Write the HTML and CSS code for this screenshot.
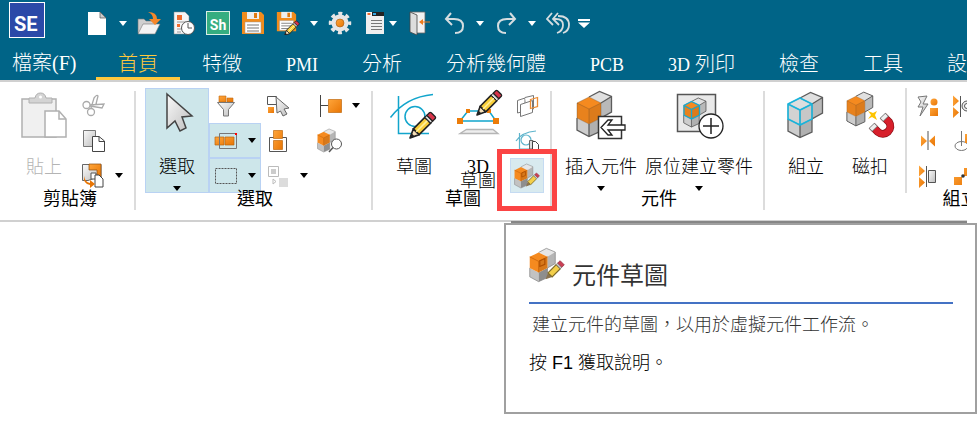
FILE: index.html
```html
<!DOCTYPE html>
<html lang="zh-Hant">
<head>
    <meta charset="UTF-8">
    <title>Solid Edge</title>
    <link rel="stylesheet" href="styles.css">
</head>
<body>

<!-- shared shapes -->
<svg class="defs" aria-hidden="true">
    <defs>
        <linearGradient id="orange" x1="0" y1="0" x2="1" y2="1">
            <stop offset="0" stop-color="#ffa53a"/>
            <stop offset="1" stop-color="#e87504"/>
        </linearGradient>
        <linearGradient id="gray" x1="0" y1="0" x2="1" y2="1">
            <stop offset="0" stop-color="#fafafa"/>
            <stop offset="1" stop-color="#bdbdbd"/>
        </linearGradient>
    </defs>
    <symbol id="blocks" viewBox="-1 -1 37 48">
        <path d="M12 6 22.5 .5 34.5 5.5V21L24 27V12z" fill="#e0e0e0"/>
        <path d="M24 12 34.5 5.5V21L24 27z" fill="#b9b9b9"/>
        <path d="M0 27 12 33V45.5L0 39z" fill="#cdcdcd"/>
        <path d="M12 33 24 27V40L12 45.5z" fill="#b0b0b0"/>
        <path d="M12 6 22.5 .5 34.5 5.5V21L24 27V40L12 45.5 0 39V27M12 33V45.5M24 12 34.5 5.5" fill="none" stroke="#5c5c5c" stroke-width="1.3"/>
        <path d="M12 6 24 12V27L12 33 0 27V12z" fill="currentColor"/>
        <path d="M0 12 12 18V33L0 27z" fill="#000" opacity=".05"/>
        <path d="M12 18 24 12V27L12 33z" fill="#000" opacity=".1"/>
        <path d="M12 6 24 12V27L12 33 0 27V12zM0 12 12 18 24 12M12 18V33" fill="none" stroke="#6b4a2a" stroke-opacity=".35"/>
    </symbol>
    <symbol id="blocks-soft" viewBox="-1 -1 37 48">
        <path d="M12 6 22.5 .5 34.5 5.5V21L24 27V12z" fill="#e6e6e6"/>
        <path d="M24 12 34.5 5.5V21L24 27z" fill="#b5b5b5"/>
        <path d="M0 27 12 33V45.5L0 39z" fill="#c2c2c2"/>
        <path d="M12 33 24 27V40L12 45.5z" fill="#8e8e8e"/>
        <path d="M12 6 22.5 .5 34.5 5.5V21L24 27V40L12 45.5 0 39V27" fill="none" stroke="#888"/>
        <path d="M12 6 24 12V27L12 33 0 27V12z" fill="currentColor"/>
        <path d="M12 18 24 12V27L12 33z" fill="#000" opacity=".12"/>
        <path d="M0 12 12 18 24 12M12 18V33" fill="none" stroke="#c46208"/>
    </symbol>
    <symbol id="pencil" viewBox="0 0 27 27">
        <path d="M1 26 4.2 17.2 9.8 22.8z" fill="#f6dfb8" stroke="#222" stroke-width="1.6" stroke-linejoin="round"/>
        <path d="M1 26 2.5 21.5 5.5 24.5z" fill="#222"/>
        <path d="M4.2 17.2 15.2 6.2 20.8 11.8 9.8 22.8z" fill="#f9cf3a" stroke="#222" stroke-width="1.6"/>
        <path d="M7 20 18 9" stroke="#fff0a0" stroke-width="1.5"/>
        <path d="M15.2 6.2 17.2 4.2 22.8 9.8 20.8 11.8z" fill="#ddd" stroke="#222"/>
        <path d="M17.2 4.2 19.7 1.7Q20.5 1 21.5 1.7L25.3 5.5Q26 6.5 25.3 7.3L22.8 9.8z" fill="#d8344a" stroke="#222" stroke-width="1.3"/>
    </symbol>
    <symbol id="pencil-soft" viewBox="0 0 27 27">
        <path d="M1 26 4.2 17.2 9.8 22.8z" fill="#8a7350"/>
        <path d="M4.2 17.2 15.2 6.2 20.8 11.8 9.8 22.8z" fill="#f3cf4a" stroke="#7d6a2a" stroke-width="1.6"/>
        <path d="M15.2 6.2 17.2 4.2 22.8 9.8 20.8 11.8z" fill="#ccc" stroke="#777"/>
        <path d="M17.2 4.2 20.5 1 26 6.5 22.8 9.8z" fill="#cc3f54" stroke="#8f3040"/>
    </symbol>
    <symbol id="caret" viewBox="0 0 8 5">
        <path d="M0 0H8L4 5z" fill="currentColor"/>
    </symbol>
    <symbol id="part-sketch" viewBox="1 1 25 25">
        <use href="#blocks-soft" x="1" y="1" width="19" height="25"/>
        <path d="M8.5 10.5 12 9V13L8.500 14.5z" fill="none" stroke="#b04f00" stroke-width=".8"/>
        <use href="#pencil-soft" x="12" y="10" width="14" height="14"/>
    </symbol>
    <symbol id="floppy" viewBox="0 0 24 24">
        <path d="M1 1H20L23 4V23H1z" fill="#f28c1c"/>
        <path d="M6 1H18V8H6z" fill="#eee"/>
        <path d="M13 2H16V7H13z" fill="#e07a10"/>
        <path d="M4 11H20V22H4z" fill="#fff" stroke="#999" stroke-width=".5"/>
        <path d="M6 14H18M6 17H18M6 20H18" stroke="#777"/>
    </symbol>
</svg>

<div class="app">
    <header class="titlebar">
        <div class="quick-bar">
            <div class="logo">SE</div>
            <button class="quick" aria-label="新建">
                <svg viewBox="0 0 24 24"><path d="M3 1H15L21 7V24H3z" fill="#fff"/><path d="M15 1V7H21z" fill="#ccc" stroke="#555" stroke-width=".7"/></svg>
            </button>
            <button class="quick-caret" aria-label="新建選項"><svg><use href="#caret"/></svg></button>
            <button class="quick" aria-label="開啟">
                <svg viewBox="0 0 24 24"><path d="M1 22V8H7L9 10H18V22z" fill="#cfcfcf" stroke="#777" stroke-width=".6"/><path d="M1 23 6 13H23L18 23z" fill="#f3f3f3" stroke="#777" stroke-width=".6"/><path d="M11 1Q20 1 20 8H24L18 14 12 8H16Q16 3 11 1z" fill="#f5872a"/></svg>
            </button>
            <button class="quick" aria-label="最近的文件">
                <svg viewBox="0 0 24 24"><path d="M2 1H13L17 5V23H2z" fill="#f5f5f5" stroke="#888" stroke-width=".5"/><path d="M5 4H10V9H5zM5 13H8V16H5z" fill="#ee6b2d"/><path d="M5 11H14M5 18H9M5 21H9" stroke="#999"/><circle cx="16" cy="17" r="6.5" fill="#fff" stroke="#555"/><path d="M16 12V17H20" fill="none" stroke="#555"/></svg>
            </button>
            <button class="quick sh">Sh</button>
            <button class="quick" aria-label="儲存"><svg><use href="#floppy"/></svg></button>
            <button class="quick" aria-label="另存新檔">
                <svg viewBox="0 0 24 24"><use href="#floppy" width="21" height="21"/><use href="#pencil" x="8" y="9" width="16" height="16"/></svg>
            </button>
            <button class="quick-caret" aria-label="儲存選項"><svg><use href="#caret"/></svg></button>
            <button class="quick" aria-label="設定">
                <svg viewBox="0 0 24 24"><circle cx="12" cy="12" r="9.5" fill="none" stroke="#e6e6e6" stroke-width="3.5" stroke-dasharray="4 3.46" stroke-dashoffset="2"/><circle cx="12" cy="12" r="8.5" fill="#e6e6e6"/><circle cx="12" cy="12" r="4" fill="url(#orange)" stroke="#a65a10" stroke-width=".6"/></svg>
            </button>
            <button class="quick" aria-label="視窗">
                <svg viewBox="0 0 24 24"><path d="M3 1H21V6H3z" fill="#222"/><path d="M3 1H9V5H3z" fill="#f5f5f5"/><path d="M4.500 2H7.500V4H4.500z" fill="#ee6b2d"/><path d="M10 2H13V4H10z" fill="#35a7e0"/><path d="M3 5H21V23H3z" fill="#efefef"/><path d="M8 9.500H19M8 12.500H19M8 15.500H19M8 18.500H19" stroke="#777"/></svg>
            </button>
            <button class="quick-caret near" aria-label="視窗選項"><svg><use href="#caret"/></svg></button>
            <button class="quick" aria-label="關閉">
                <svg viewBox="0 0 24 24"><path d="M3 1H18V22H10" fill="#f2f2f2" stroke="#666" stroke-width=".8"/><path d="M3 1 10 4V24L3 21z" fill="#ddd" stroke="#444" stroke-width=".8"/><path d="M12 11 16 8V10.500H23V11.500H16V14z" fill="#ee7b1d"/></svg>
            </button>
            <button class="quick" aria-label="復原">
                <svg viewBox="0 0 24 24" fill="none" stroke="#d5dde0" stroke-width="2"><path d="M9 2 4 8 10 14M4 8H12Q21 8 21 15T13 22"/></svg>
            </button>
            <button class="quick-caret" aria-label="復原選項"><svg><use href="#caret"/></svg></button>
            <button class="quick" aria-label="重做">
                <svg viewBox="0 0 24 24" fill="none" stroke="#d5dde0" stroke-width="2"><path d="M16 2 21 8 15 14M21 8H13Q4 8 4 15T12 22"/></svg>
            </button>
            <button class="quick-caret" aria-label="重做選項"><svg><use href="#caret"/></svg></button>
            <button class="quick" aria-label="全部復原">
                <svg viewBox="0 0 24 24" fill="none" stroke="#d5dde0" stroke-width="1.8"><path d="M6 2 1 8 7 14M12 2 7 8 13 14M7 8H10Q17 8 17 14 17 20 11 22M12 5Q23 5 23 14 23 20 17 22"/></svg>
            </button>
            <button class="quick-caret" aria-label="自訂快速存取工具列">
                <svg class="wide-caret" viewBox="0 0 12 9"><path d="M0 0H12V2H0zM0 3.500H12L6 9z" fill="#fff"/></svg>
            </button>
        </div>
        <nav class="tabs">
            <button class="tab file">檔案(F)</button>
            <button class="tab active">首頁</button>
            <button class="tab">特徵</button>
            <button class="tab"><span class="latin">PMI</span></button>
            <button class="tab">分析</button>
            <button class="tab">分析幾何體</button>
            <button class="tab"><span class="latin">PCB</span></button>
            <button class="tab"><span class="latin">3D</span> 列印</button>
            <button class="tab">檢查</button>
            <button class="tab">工具</button>
            <button class="tab">設定</button>
        </nav>
    </header>

    <main class="ribbon">
        <section class="group">
            <div class="group-body">
                <button class="large" disabled>
                    <svg viewBox="0 0 52 52"><path d="M4 10H38V48H4z" fill="#f0f0f0" stroke="#b0b0b0" stroke-width="1.5"/><path d="M11 14V9H17Q18 4 22.5 4T28 9H34V14z" fill="#d4d4d4" stroke="#b0b0b0"/><circle cx="22.5" cy="8" r="1.5" fill="#fff"/><path d="M27 22H41L48 30V48H27z" fill="#fff" stroke="#b0b0b0" stroke-width="1.5"/><path d="M41 22V30H48" fill="none" stroke="#b0b0b0" stroke-width="1.5"/></svg>
                    <span class="caption">貼上</span>
                </button>
                <div class="tools">
                    <div class="tool">
                        <button aria-label="剪下" disabled><svg viewBox="0 0 28 28" fill="none" stroke="#aaa" stroke-width="1.3"><circle cx="7.5" cy="13" r="3.5"/><circle cx="12" cy="20" r="3.5"/><path d="M11 13 25 12 23 16 11 14M12 16 15 6Q18 2 19 4L17 12"/></svg></button>
                    </div>
                    <div class="tool">
                        <button aria-label="複製"><svg viewBox="0 0 28 28"><path d="M4.5 3.5H16.500V19.500H4.5z" fill="url(#gray)" stroke="#777"/><path d="M13.500 9.500H20L25.500 14V24.500H13.500z" fill="#fff" stroke="#444"/><path d="M20 9.500V14.500H25" fill="none" stroke="#444"/></svg></button>
                    </div>
                    <div class="tool">
                        <button aria-label="選擇性貼上"><svg viewBox="0 0 28 28"><path d="M3.5 2.500H22V16H16L9 18.500H3.500z" fill="url(#gray)" stroke="#666"/><path d="M10 2H22V16H18V8H10z" fill="url(#orange)" stroke="#8a4a10" stroke-width=".7"/><path d="M12 11H17V17H12z" fill="#fff" stroke="#555"/><path d="M16 13H20L24 17V25H16z" fill="#fff" stroke="#444"/><path d="M5 14Q6 20 11 21V18L16 22 11 26V23Q4 22 5 14z" fill="#e87504"/></svg></button>
                        <button class="drop" aria-label="貼上選項"><svg><use href="#caret"/></svg></button>
                    </div>
                </div>
            </div>
            <h2>剪貼簿</h2>
        </section>

        <section class="group">
            <div class="group-body">
                <button class="large selected">
                    <svg viewBox="0 0 52 52"><path d="M16 5 41 27 31 28 35 39 29 42 24 32 16 39z" fill="url(#gray)" stroke="#444" stroke-width="1.5"/></svg>
                    <span class="caption">選取</span>
                    <svg class="more"><use href="#caret"/></svg>
                </button>
                <div class="tools">
                    <div class="tool">
                        <button aria-label="選取篩選器"><svg viewBox="0 0 28 28"><path d="M7 4H14V10H7zM15 6H21V10H15z" fill="url(#orange)" stroke="#c06a10" stroke-width=".6"/><path d="M5.500 10.500H22.500L16.500 17.500V24H11.500V17.500z" fill="url(#gray)" stroke="#777"/></svg></button>
                    </div>
                    <div class="tool selected">
                        <button aria-label="方框選取"><svg viewBox="0 0 28 28"><path d="M3 10H12V18H3zM13 10H22V18H13z" fill="url(#orange)" stroke="#b86410" stroke-width=".7"/><path d="M7.500 6.500H24.500V21.500H7.500z" fill="none" stroke="#777"/><path d="M23 6H25V8H23z" fill="#f00"/></svg></button>
                        <button class="drop" aria-label="方框選取選項"><svg><use href="#caret"/></svg></button>
                    </div>
                    <div class="tool selected">
                        <button aria-label="矩形選取"><svg viewBox="0 0 28 28"><path d="M3.500 6.500H24.500V21.500H3.500z" fill="none" stroke="#555" stroke-dasharray="2 1"/></svg></button>
                        <button class="drop" aria-label="矩形選取選項"><svg><use href="#caret"/></svg></button>
                    </div>
                    <div class="tool">
                        <button aria-label="快速選取"><svg viewBox="0 0 28 28"><path d="M3.500 4.500H12.500V12.500H3.500z" fill="#fff" stroke="#555"/><path d="M4 15H10V21H4z" fill="url(#orange)"/><path d="M12 5 25 16 20 17 23 22 19 24 16.500 19 13 21z" fill="url(#gray)" stroke="#666"/></svg></button>
                    </div>
                    <div class="tool">
                        <button aria-label="選取零件"><svg viewBox="0 0 28 28"><path d="M5.500 10.500H22.500V24.500H5.500z" fill="#fff" stroke="#555"/><path d="M9.500 3.500H18.500V11.500H9.500zM9.500 13.500H18.500V22.500H9.500z" fill="url(#orange)" stroke="#c06a10" stroke-width=".7"/></svg></button>
                    </div>
                    <div class="tool">
                        <button aria-label="選取集" disabled><svg viewBox="0 0 28 28"><path d="M4.500 4.500H14.500V14.500H4.500z" fill="#fff" stroke="#bbb"/><path d="M7 7H12V12H7z" fill="#ccc"/><path d="M9 17V22L12 19.500z" fill="#fff" stroke="#bbb"/><path d="M15 16H24V25H15z" fill="#dcdcdc"/></svg></button>
                        <button class="drop" aria-label="選取集選項"><svg><use href="#caret"/></svg></button>
                    </div>
                    <div class="tool">
                        <button aria-label="啟用零件"><svg viewBox="0 0 28 28"><path d="M4.500 3V25M4.500 13.500H12" stroke="#444"/><path d="M12.500 7.500H25.500V20.500H12.500z" fill="url(#orange)" stroke="#c06a10" stroke-width=".7"/></svg></button>
                        <button class="drop" aria-label="啟用零件選項"><svg><use href="#caret"/></svg></button>
                    </div>
                    <div class="tool">
                        <button class="orange" aria-label="尋找零件"><svg viewBox="0 0 28 28"><use href="#blocks-soft" x="1" y="1" width="19" height="25"/><circle cx="20.500" cy="17" r="5" fill="#fff" stroke="#555"/><path d="M17 20.500 13 25" stroke="#555" stroke-width="1.5"/></svg></button>
                    </div>
                </div>
            </div>
            <h2>選取</h2>
        </section>

        <section class="group">
            <div class="group-body">
                <button class="large">
                    <svg viewBox="0 0 52 52"><g fill="none" stroke="#12a5cc" stroke-width="1.5"><path d="M10.5 7V44.500H41M2.5 28.500Q18 8 45 5.500"/><circle cx="27" cy="27.500" r="10"/></g><use href="#pencil" x="21" y="22" width="28" height="28"/></svg>
                    <span class="caption">草圖</span>
                </button>
                <button class="large">
                    <svg viewBox="0 0 52 52"><path d="M8 32 16 22H37L44 32z" fill="#fff" stroke="#12a5cc" stroke-width="1.5"/><path d="M8 44.500 14.500 40.500H41L46 44.500z" fill="#eee" stroke="#b5b5b5" stroke-width="1.3"/><path d="M5 29H11V35H5zM41 29H47V35H41zM14 20H18V24H14zM35 20H39V24H35z" fill="#ec7c09"/><use href="#pencil" x="24" y="0" width="27" height="27"/></svg>
                    <span class="caption stacked">3D<br>草圖</span>
                </button>
                <div class="tools narrow">
                    <div class="tool">
                        <button aria-label="複製草圖"><svg viewBox="0 0 28 28"><path d="M4.500 8.500 12 6V19L4.500 21z" fill="#fff" stroke="#777"/><path d="M12 5.500 20.500 3.500V17L15 18.500" fill="#fff" stroke="#777"/><path d="M7.500 12.500 19.500 8.500V20.500L7.500 24.500z" fill="#fff" stroke="#777"/><path d="M17.500 7.500 24.500 5.500V14.500L17.500 16.500z" fill="none" stroke="#ec8d35" stroke-width="1.3"/></svg></button>
                    </div>
                    <div class="tool">
                        <button aria-label="貼上草圖"><svg viewBox="0 0 28 28"><g fill="none" stroke="#5eb4cc" stroke-width="1.2"><path d="M6.500 6V22H16M3 14Q9 5 23 4"/><circle cx="13" cy="13" r="5"/></g><path d="M16.500 13.500H20V22H16.500z" fill="#ddd" stroke="#666"/><path d="M19.500 14.500H22.500L25.500 17.500V24H19.500z" fill="#fff" stroke="#444"/></svg></button>
                    </div>
                    <div class="tool callout">
                        <button class="orange" aria-label="元件草圖"><svg viewBox="0 0 28 28"><use href="#part-sketch" x="1" y="1" width="26" height="26"/></svg></button>
                    </div>
                </div>
            </div>
            <h2>草圖</h2>
        </section>

        <section class="group">
            <div class="group-body">
                <button class="large">
                    <svg class="orange" viewBox="0 0 52 52"><use href="#blocks" x="1" y="1" width="37" height="48"/><path d="M23.500 27.500H46.500V49.500H23.500z" fill="#fff" stroke="#333" stroke-width="1.5"/><path d="M26 38.500 33 31H37L33 36H50V41H33L37 46H33z" fill="#fff" stroke="#222" stroke-width="1.3"/></svg>
                    <span class="caption">插入元件</span>
                    <svg class="more"><use href="#caret"/></svg>
                </button>
                <button class="large">
                    <svg class="orange" viewBox="0 0 52 52"><path d="M4.500 5.500H42.500V42.500H4.500z" fill="#e9e9e9" stroke="#555" stroke-width="1.5"/><use href="#blocks" x="10" y="8" width="24" height="31"/><path d="M18.500 12.500 26.500 16.500V26L18.500 30 11 26V16.500zM11 16.500 18.500 20.500 26.500 16.500M18.500 20.500V30" fill="none" stroke="#18a8d0" stroke-width="1.3"/><circle cx="38" cy="37" r="12" fill="#fff" stroke="#222" stroke-width="1.3"/><path d="M30 37H46M38 29V45" stroke="#222" stroke-width="1.5"/></svg>
                    <span class="caption">原位建立零件</span>
                    <svg class="more"><use href="#caret"/></svg>
                </button>
            </div>
            <h2>元件</h2>
        </section>

        <section class="group assemble">
            <div class="group-body">
                <button class="large">
                    <svg class="gray" viewBox="0 0 52 52"><use href="#blocks" x="7" y="2" width="37" height="48"/><path d="M20 9 32 15V30L20 36 8 30V15zM8 15 20 21 32 15M20 21V36" fill="none" stroke="#18b4dc" stroke-width="1.6"/></svg>
                    <span class="caption">組立</span>
                </button>
                <button class="large">
                    <svg class="orange" viewBox="0 0 52 52"><use href="#blocks" x="2" y="2" width="28" height="36"/><path d="M24 22 29 24 33 22 31 26 33 31 28 28 24 30 27 26z" fill="#fdc400"/><path d="M28 37 34 43A7.500 7.500 0 0 0 45 33L39 27" fill="none" stroke="#8c1018" stroke-width="8"/><path d="M28 37 34 43A7.500 7.500 0 0 0 45 33L39 27" fill="none" stroke="#d71f2b" stroke-width="6.500"/><path d="M27.500 36.500 31 40M38.500 26.500 42 30" stroke="#777" stroke-width="8"/><path d="M28 37 30.500 39.500M39 27 41.500 29.500" stroke="#eee" stroke-width="6.500"/></svg>
                    <span class="caption">磁扣</span>
                </button>
                <div class="separator"></div>
                <div class="tools narrow">
                    <div class="tool">
                        <button aria-label="快速組立"><svg viewBox="0 0 28 28"><path d="M5 5 14 4 10 12H15L7 24 10 15H5L8 10z" fill="url(#gray)" stroke="#777"/><circle cx="21" cy="10" r="3.500" fill="url(#orange)"/><path d="M17 16H25V24H17z" fill="url(#orange)"/></svg></button>
                    </div>
                    <div class="tool">
                        <button aria-label="貼合"><svg viewBox="0 0 28 28"><path d="M15 4V23" stroke="#555"/><path d="M8 8.500V19.500L14 14zM22 8.500V19.500L16 14z" fill="url(#orange)"/></svg></button>
                    </div>
                    <div class="tool">
                        <button aria-label="平面對齊"><svg viewBox="0 0 28 28"><path d="M13.500 4V25" stroke="#555"/><path d="M6 3.500V14.500L12 9zM6 15V26L12 20.500z" fill="url(#orange)"/><path d="M15.500 8.500H22.500V20.500H15.500z" fill="url(#gray)" stroke="#555"/></svg></button>
                    </div>
                    <div class="tool">
                        <button aria-label="軸對齊"><svg viewBox="0 0 28 28"><path d="M13.500 4V25" stroke="#555"/><path d="M6 3.500V14.500L12 9zM6 15V26L12 20.500z" fill="url(#orange)"/><circle cx="20" cy="14" r="5" fill="#eee" stroke="#555"/><circle cx="20" cy="14" r="2.500" fill="#fff" stroke="#555"/></svg></button>
                    </div>
                    <div class="tool">
                        <button aria-label="插入"><svg viewBox="0 0 28 28"><ellipse cx="14.500" cy="19" rx="6.500" ry="4.500" fill="#fff" stroke="#777"/><path d="M14.500 4V19" stroke="#777"/><path d="M18 7H25V16H18z" fill="url(#orange)"/></svg></button>
                    </div>
                    <div class="tool">
                        <button aria-label="連接"><svg viewBox="0 0 28 28"><path d="M7 15H15V23H7zM17 6H25V14H17z" fill="url(#orange)"/><circle cx="16" cy="14" r="1.8" fill="#333"/></svg></button>
                    </div>
                </div>
            </div>
            <h2>組立</h2>
        </section>
    </main>
</div>

<aside class="tooltip" role="tooltip">
    <div class="tooltip-head">
        <svg class="orange" viewBox="0 0 36 38"><use href="#part-sketch"/></svg>
        <h1>元件草圖</h1>
    </div>
    <p class="summary">建立元件的草圖，以用於虛擬元件工作流。</p>
    <p class="help">按 F1 獲取說明。</p>
</aside>

</body>
</html>
```
FILE: styles.css
```css
* {
    box-sizing: border-box;
}

body {
    margin: 0;
    background: #fff;
    color: #000;
    font-family: "Liberation Serif", "Noto Sans CJK TC", serif;
    font-size: 18px;
    font-weight: 300;
}

button {
    margin: 0;
    padding: 0;
    border: none;
    background: transparent;
    color: inherit;
    font: inherit;
    cursor: pointer;
}

h1, h2, p {
    margin: 0;
    font-weight: 300;
}

svg {
    display: block;
    flex: none;
}

.defs {
    position: absolute;
    width: 0;
    height: 0;
}

.app {
    margin-right: 12px;
    overflow: hidden;
}

.orange {
    color: #f58a1f;
}

.gray {
    color: #dedede;
}

/* Title bar */
.titlebar {
    background: #006487;
    color: #fff;
    border-bottom: 2px solid #d0d0d0;
}

.quick-bar {
    display: flex;
    align-items: center;
    height: 46px;
    padding-left: 9px;
}

.logo {
    width: 36px;
    height: 36px;
    margin: 0 34px 6px 0;
    padding-left: 4px;
    border: 1px solid #fff;
    background: #2b49a8;
    font: bold 20px/42px "Roboto", sans-serif;
}

.quick {
    display: flex;
    justify-content: center;
    flex: none;
    width: 35px;
}

.quick svg {
    width: 24px;
    height: 24px;
}

.quick.sh {
    width: 24px;
    height: 24px;
    margin: 0 5px;
    border: 1px solid #d9efe6;
    background: #35ad80;
    font: bold 14px/26px "Roboto", sans-serif;
}

.quick-caret {
    display: flex;
    justify-content: center;
    flex: none;
    width: 17px;
}

.quick-caret.near {
    margin-left: -8px;
}

.quick-caret svg {
    width: 8px;
    height: 5px;
}

.quick-caret .wide-caret {
    width: 12px;
    height: 9px;
}

.tabs {
    display: flex;
    height: 34px;
}

.tab {
    flex: none;
    padding: 5px 22px 0;
    border-bottom: 3px solid transparent;
    font-size: 20px;
    line-height: 26px;
    white-space: nowrap;
}

.tab.file {
    width: 96px;
    padding: 2px 0 0 12px;
    text-align: left;
}

.tab.active {
    border-color: #ffc83d;
    color: #ffc83d;
}

.latin {
    font-size: 18px;
}

/* Ribbon */
.ribbon {
    display: flex;
    padding: 9px 0 10px;
    border-bottom: 2px solid #d0d0d0;
}

.group {
    flex: none;
    padding: 0 6px 1px 9px;
    border-right: 2px solid #dcdcdc;
}

.group:first-child {
    padding-left: 12px;
}

.group.assemble {
    min-width: 390px;
}

.group-body {
    display: flex;
    height: 105px;
    margin-top: -3px;
}

.group h2 {
    margin-top: -4px;
    font-size: 18px;
    font-weight: 400;
    line-height: 20px;
    text-align: center;
}

.large {
    display: flex;
    flex-direction: column;
    align-items: center;
    min-width: 64px;
    padding: 1px 4px 0;
}

.large svg {
    width: 52px;
    height: 52px;
}

.large .caption {
    margin-top: 16px;
    line-height: 20px;
    white-space: nowrap;
}

.large .caption.stacked {
    margin-top: 19px;
    line-height: 14px;
}

.large .more {
    width: 8px;
    height: 5px;
    margin-top: 9px;
}

.large:disabled {
    color: #b4b4b4;
}

.selected {
    background: #cde6ea;
    box-shadow: inset 0 0 0 1px #b9d2f3;
}

.tools {
    display: grid;
    grid-template-rows: repeat(3, 35px);
    grid-auto-columns: 52px;
    grid-auto-flow: column;
}

.tools.narrow {
    grid-auto-columns: 34px;
}

.tool {
    display: flex;
}

.tool button {
    display: flex;
    align-items: center;
    justify-content: center;
    width: 34px;
}

.tool svg {
    width: 28px;
    height: 28px;
}

.tool .drop {
    width: 18px;
}

.tool .drop svg {
    width: 8px;
    height: 5px;
}

.separator {
    width: 2px;
    margin: 0 3px;
    background: #dcdcdc;
}

/* red frame round the highlighted command */
.callout {
    position: relative;
    background: #d8eaef;
    box-shadow: inset 0 0 0 1px #c5dbf2;
}

.callout::after {
    content: "";
    position: absolute;
    top: -9px;
    right: -13px;
    bottom: -18px;
    left: -13px;
    border: 5px solid #fb4444;
    pointer-events: none;
}

/* Tooltip */
.tooltip {
    position: absolute;
    top: 223px;
    right: 2px;
    width: 473px;
    padding: 21px 22px 36px 23px;
    border: 2px solid #a0a0a0;
    background: #fff;
}

.tooltip::before {
    content: "";
    position: absolute;
    top: -4px;
    right: 8px;
    left: 5px;
    height: 2px;
    background: #868686;
}

.tooltip-head {
    display: flex;
    gap: 7px;
    height: 58px;
    border-bottom: 2px solid #4472c4;
}

.tooltip-head svg {
    width: 36px;
    height: 38px;
}

.tooltip-head h1 {
    padding-top: 14px;
    color: #333;
    font-size: 24px;
    font-weight: 400;
    line-height: 32px;
}

.summary {
    padding: 8px 0 0 3px;
    color: #333;
    line-height: 26px;
}

.help {
    padding-top: 12px;
    font-family: "Liberation Sans", "Noto Sans CJK TC", sans-serif;
    line-height: 26px;
}
```
